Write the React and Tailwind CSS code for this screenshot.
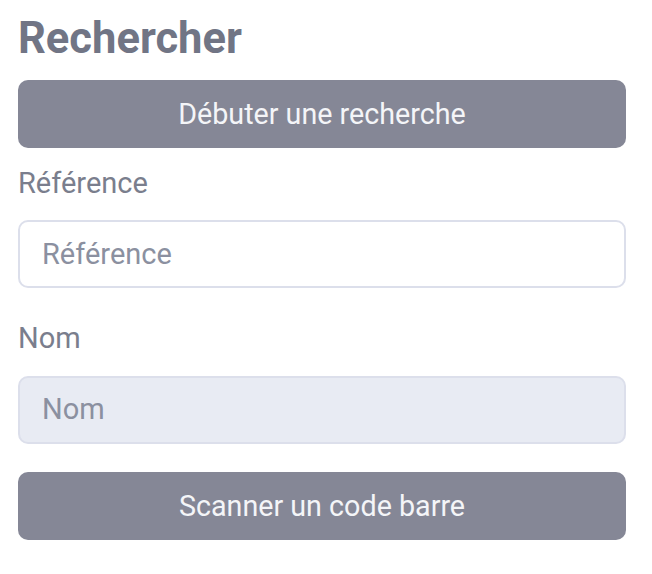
export default function App() {
  return (
    <div className="w-[652px] h-[574px] bg-white pl-[18px] pr-[26px] pt-[13px] font-['Roboto',sans-serif]">
      <h1 className="text-[43.5px] leading-[52px] font-bold text-[#717585]">Rechercher</h1>
      <button className="mt-[15px] w-full h-[68px] rounded-[10px] bg-[#858796] text-[#f4f5f8] text-[28.7px] pt-[2px] flex items-center justify-center">
        Débuter une recherche
      </button>
      <label className="block mt-[15px] text-[29px] leading-[40px] text-[#7a7e8d]">Référence</label>
      <input
        className="mt-[17px] block w-full h-[68px] rounded-[10px] border-2 border-[#dcdfeb] bg-white px-[22px] text-[29px] text-[#555] placeholder:text-[#8b90a0] outline-none"
        placeholder="Référence"
      />
      <label className="block mt-[30px] text-[29px] leading-[40px] text-[#7a7e8d]">Nom</label>
      <input
        disabled
        className="mt-[18px] block w-full h-[68px] rounded-[10px] border-2 border-[#dcdfeb] bg-[#e8ebf3] px-[22px] pb-[2px] text-[29px] placeholder:text-[#8b90a0] outline-none"
        placeholder="Nom"
      />
      <button className="mt-[28px] w-full h-[68px] rounded-[10px] bg-[#858796] text-[#f4f5f8] text-[28.7px] pt-[2px] flex items-center justify-center">
        Scanner un code barre
      </button>
    </div>
  );
}
